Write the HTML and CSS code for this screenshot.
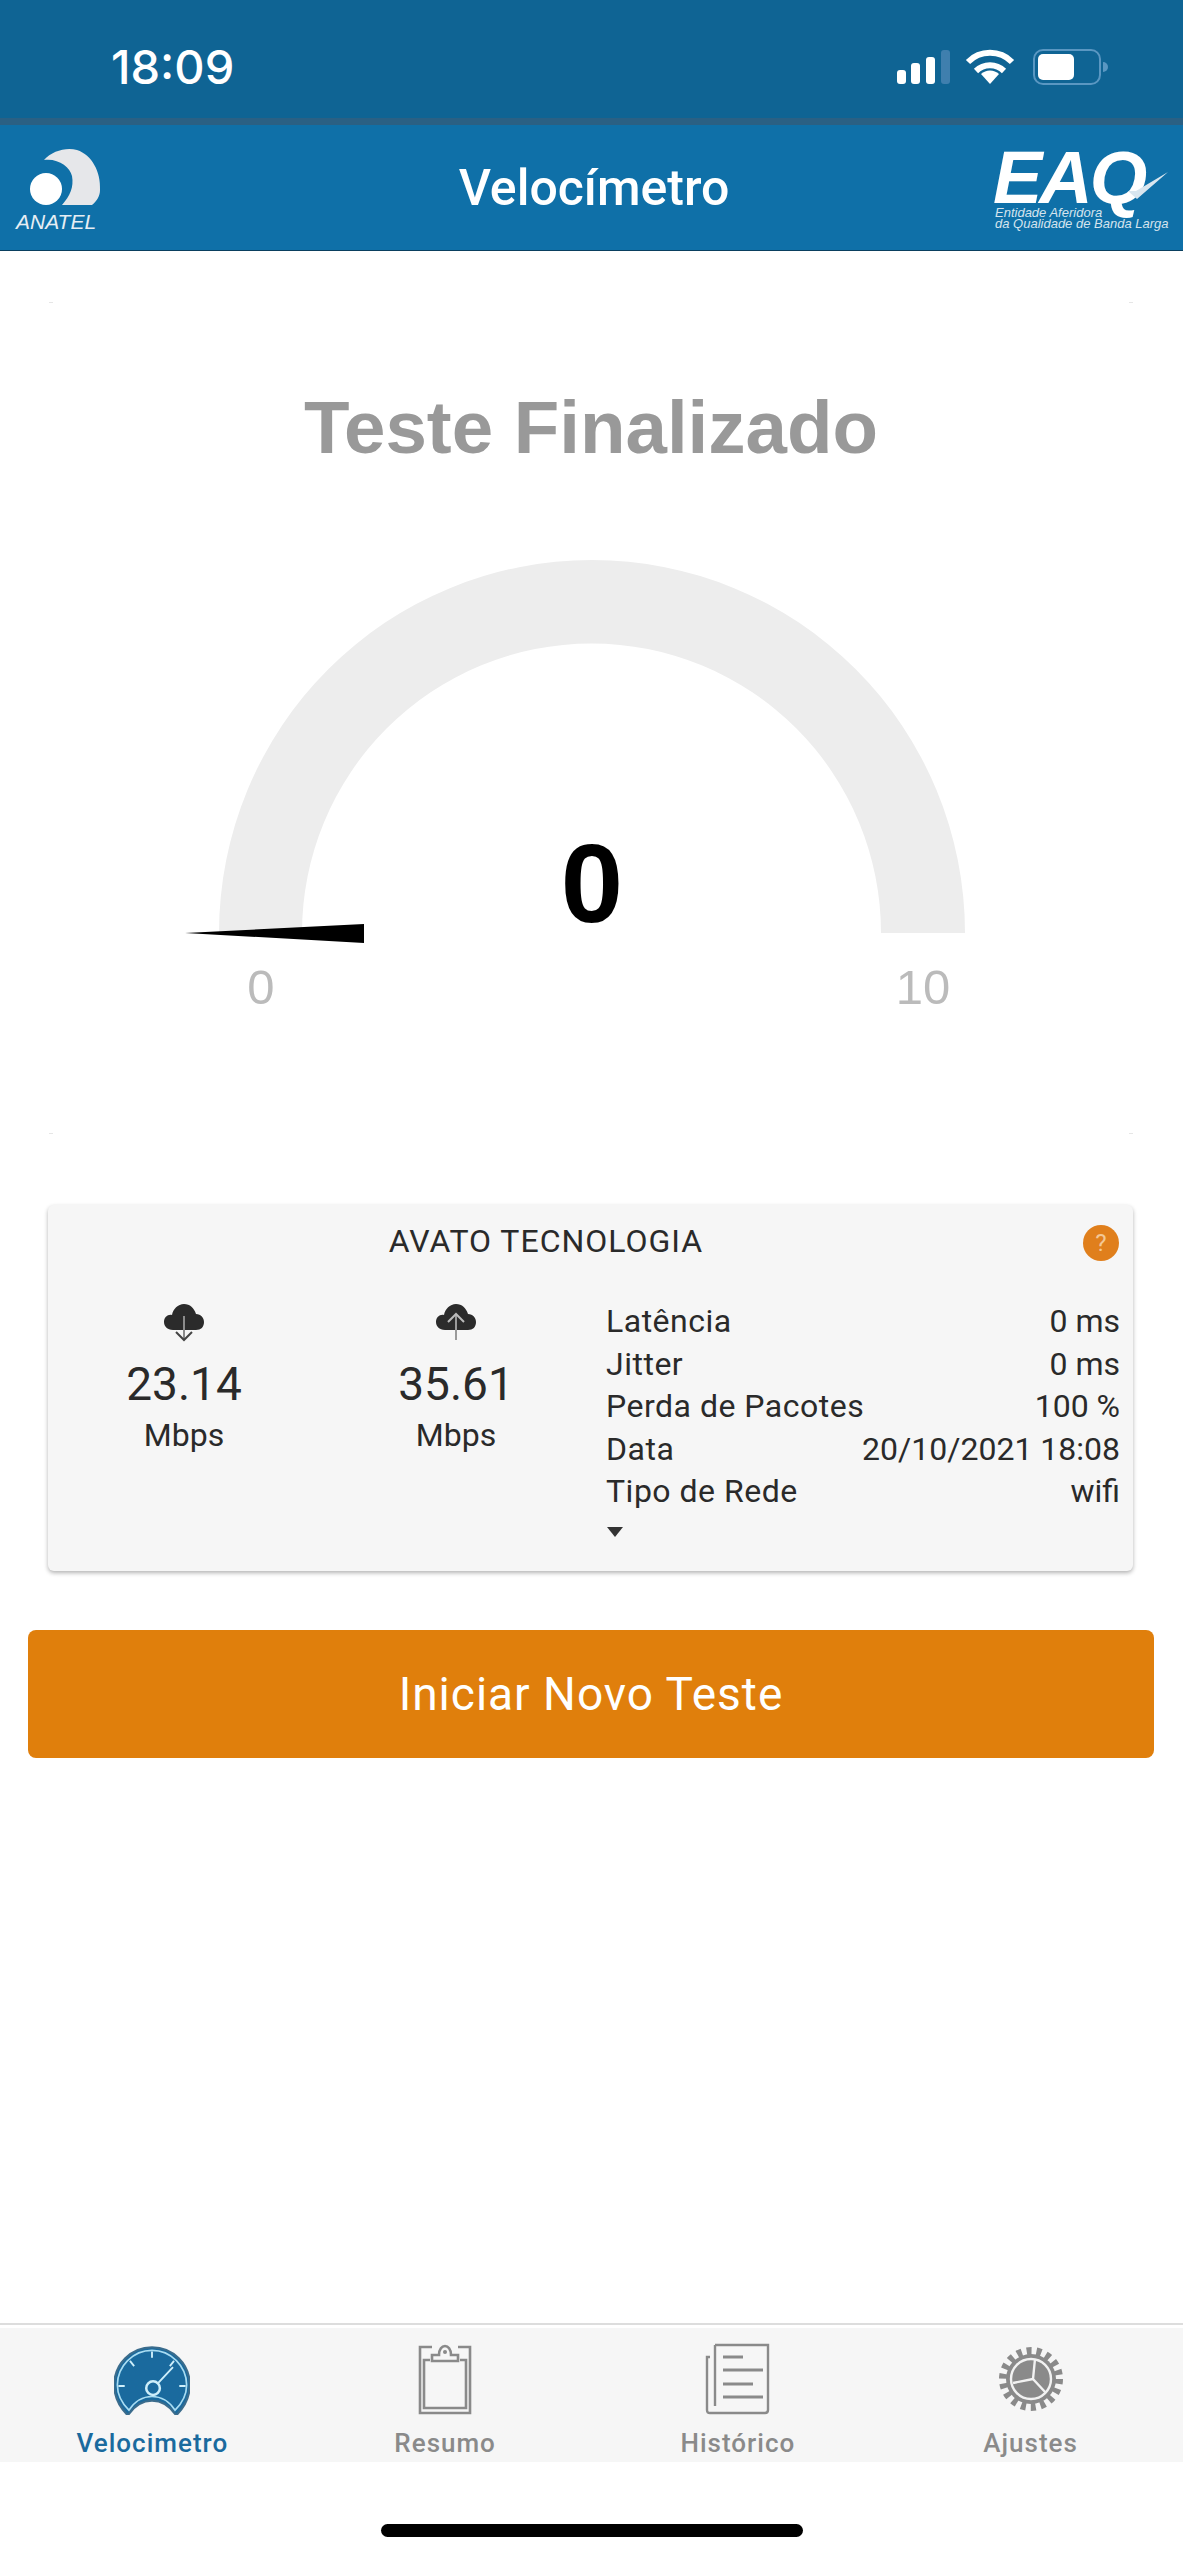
FILE: index.html
```html
<!DOCTYPE html>
<html lang="pt-BR">
<head>
    <meta charset="UTF-8">
    <meta name="viewport" content="width=device-width, initial-scale=1.0">
    <title>Velocímetro</title>
    <link rel="stylesheet" href="styles.css">
</head>
<body>

<div class="status-bar">
    <span class="status-time">18:09</span>
    <svg class="status-icons" viewBox="895 48 214 38" width="214" height="38">
        <rect x="897" y="70" width="9" height="14" rx="3" fill="#fff"/>
        <rect x="911" y="63" width="9" height="21" rx="3" fill="#fff"/>
        <rect x="926" y="57" width="9" height="27" rx="3" fill="#fff"/>
        <rect x="941" y="50" width="9" height="34" rx="3" fill="#3f7fae"/>
        <path d="M968 62A31 31 0 0 1 1012 62M976 71A20 20 0 0 1 1004 71" fill="none" stroke="#fff" stroke-width="6"/>
        <path d="M990 84L981 74A13 13 0 0 1 999 74Z" fill="#fff"/>
        <rect x="1034" y="50" width="66" height="34" rx="9" fill="none" stroke="#5a97c2" stroke-width="2"/>
        <rect x="1038" y="54" width="36" height="26" rx="5" fill="#fff"/>
        <path d="M1103 62A5 5 0 0 1 1103 72Z" fill="#5a97c2"/>
    </svg>
</div>
<div class="status-band"></div>

<header class="nav">
    <svg class="nav-logo nav-logo-left" viewBox="14 125 90 125" width="90" height="125">
        <path d="M44 160C52 151 66 147 77 150C92 155 101 172 100 190C100 196 97 201 92 205H62C70 196 74 187 72 176C70 167 58 158 44 160Z" fill="#e6e7ea"/>
        <circle cx="46" cy="189" r="16" fill="#fff"/>
        <text class="logo-anatel" x="16" y="229">ANATEL</text>
    </svg>
    <h1 class="nav-title">Velocímetro</h1>
    <svg class="nav-logo nav-logo-right" viewBox="990 125 180 125" width="180" height="125">
        <text class="logo-eaq" x="993" y="203">EAQ</text>
        <path d="M1128 191L1137 199L1168 172L1136 191Z" fill="#d9e6ef"/>
        <text class="logo-small" x="995" y="217">Entidade Aferidora</text>
        <text class="logo-small" x="995" y="228">da Qualidade de Banda Larga</text>
    </svg>
</header>

<main class="content">
    <section class="gauge-card">
        <h2 class="gauge-title">Teste Finalizado</h2>
        <svg class="gauge" viewBox="49 540 1084 490" width="1084" height="490">
            <path d="M219 933A373 373 0 0 1 965 933H881A289 289 0 0 0 302 933Z" fill="#ededed"/>
            <path d="M185 933L364 924V943Z" fill="#000"/>
            <text class="gauge-value" x="592" y="922">0</text>
            <text class="gauge-limit" x="261" y="1004">0</text>
            <text class="gauge-limit" x="923" y="1004">10</text>
        </svg>
    </section>

    <section class="info-card">
        <div class="info-head">
            <span class="info-title">AVATO TECNOLOGIA</span>
            <span class="help-badge">?</span>
        </div>
        <div class="info-body">
            <div class="speed">
                <svg class="cloud" viewBox="0 0 40 38" width="40" height="38">
                    <path d="M9 26C3 26 0 22 0 18C0 13 4 10 8 11C9 5 14 0 20 0C26 0 30 4 32 10C37 10 40 14 40 18C40 23 37 26 32 26Z" fill="#2b2b2b"/>
                    <path d="M20 12V36" stroke="#8c8c8c" stroke-width="2" fill="none"/>
                    <path d="M12 28L20 36L28 28" stroke="#444" stroke-width="2" fill="none"/>
                </svg>
                <span class="speed-value">23.14</span>
                <span class="speed-unit">Mbps</span>
            </div>
            <div class="speed">
                <svg class="cloud" viewBox="0 0 40 38" width="40" height="38">
                    <path d="M9 26C3 26 0 22 0 18C0 13 4 10 8 11C9 5 14 0 20 0C26 0 30 4 32 10C37 10 40 14 40 18C40 23 37 26 32 26Z" fill="#2b2b2b"/>
                    <path d="M20 36V10" stroke="#9a9a9a" stroke-width="2" fill="none"/>
                    <path d="M12 18L20 10L28 18" stroke="#bbb" stroke-width="2" fill="none"/>
                </svg>
                <span class="speed-value">35.61</span>
                <span class="speed-unit">Mbps</span>
            </div>
            <div class="stats">
                <div class="stat-row"><span class="stat-key">Latência</span><span>0 ms</span></div>
                <div class="stat-row"><span class="stat-key">Jitter</span><span>0 ms</span></div>
                <div class="stat-row"><span class="stat-key">Perda de Pacotes</span><span>100 %</span></div>
                <div class="stat-row"><span class="stat-key">Data</span><span>20/10/2021 18:08</span></div>
                <div class="stat-row"><span class="stat-key">Tipo de Rede</span><span>wifi</span></div>
                <div class="caret"></div>
            </div>
        </div>
    </section>

    <button class="start-button">Iniciar Novo Teste</button>
</main>

<nav class="tabbar">
    <div class="tab tab-active">
        <svg class="tab-icon" viewBox="13.8 7 72.4 68.6" width="76" height="72">
            <path d="M27 76C19 68 14 58 14 47C14 27 30 11 50 11C70 11 86 27 86 47C86 58 81 68 73 76C67 67 59 62 50 62C41 62 33 67 27 76Z" fill="#1a6a9e" stroke="#3b6c8c" stroke-width="2"/>
            <path d="M28 71C21 64 17 56 17 47C17 29 32 14 50 14C68 14 83 29 83 47C83 56 79 64 72 71C66 62 58 58 50 58C42 58 34 62 28 71Z" fill="none" stroke="#a8dcf2" stroke-width="1.6"/>
            <circle cx="51" cy="50" r="6.5" fill="none" stroke="#cdeefa" stroke-width="2.4"/>
            <path d="M56 45L70 30M50 15V21M29 24L33 29M71 24L67 29M18 48H24M76 48H82" stroke="#cdeefa" stroke-width="1.8" fill="none"/>
        </svg>
        <span class="tab-label">Velocimetro</span>
    </div>
    <div class="tab">
        <svg class="tab-icon" viewBox="0 0 54 72" width="54" height="72">
            <path d="M14 4H2V70H52V4H40" fill="none" stroke="#8a8a8a" stroke-width="2.6"/>
            <path d="M12 17H6V65H48V17H42" fill="none" stroke="#8a8a8a" stroke-width="2.6"/>
            <path d="M14 18V12H21C21 0 33 0 33 12H40V18Z" fill="none" stroke="#8a8a8a" stroke-width="2.6"/>
            <circle cx="27" cy="9" r="2" fill="#8a8a8a"/>
        </svg>
        <span class="tab-label">Resumo</span>
    </div>
    <div class="tab">
        <svg class="tab-icon" viewBox="0 0 66 72" width="66" height="72">
            <path d="M10 2H63V67Q63 70 60 70H5Q2 70 2 67V14H5M10 2V63" fill="none" stroke="#8a8a8a" stroke-width="2.4"/>
            <path d="M18 14H38M18 27H58M18 41H48M18 54H58" fill="none" stroke="#8a8a8a" stroke-width="3"/>
        </svg>
        <span class="tab-label">Histórico</span>
    </div>
    <div class="tab">
        <svg class="tab-icon" viewBox="0 0 72 72" width="72" height="72">
            <circle cx="36" cy="36" r="25" fill="#8a8a8a"/>
            <circle cx="36" cy="36" r="28" fill="none" stroke="#8a8a8a" stroke-width="8" stroke-dasharray="4.9 4.9"/>
            <circle cx="36" cy="36" r="20" fill="none" stroke="#f2f2f2" stroke-width="2.4"/>
            <path d="M38 36L40 16M38 36L18 40M38 36L51 50" fill="none" stroke="#f2f2f2" stroke-width="2.4"/>
        </svg>
        <span class="tab-label">Ajustes</span>
    </div>
</nav>

<div class="home-area">
    <div class="home-indicator"></div>
</div>

</body>
</html>
```

FILE: styles.css
```css
* {
    box-sizing: border-box;
}

html, body {
    margin: 0;
    background-color: #fff;
}

body {
    width: 1183px;
    height: 2560px;
    display: flex;
    flex-direction: column;
    font-family: Roboto, "Liberation Sans", sans-serif;
    color: #2a2a2a;
}

.status-bar {
    height: 118px;
    flex-shrink: 0;
    display: flex;
    justify-content: space-between;
    align-items: flex-start;
    padding: 0 74px 0 111px;
    background-color: #0f6494;
}

.status-time {
    margin-top: 40px;
    font-family: Inter, sans-serif;
    font-size: 47px;
    font-weight: 500;
    line-height: 54px;
    color: #fff;
}

.status-icons {
    margin-top: 48px;
}

.status-band {
    height: 7px;
    flex-shrink: 0;
    background-color: #2a6084;
}

.nav {
    height: 126px;
    flex-shrink: 0;
    display: grid;
    grid-template-columns: 1fr auto 1fr;
    align-items: center;
    background-color: #0f70a8;
    border-bottom: 1px solid #0a3f5f;
}

.nav-logo {
    display: block;
}

.nav-logo-left {
    margin-left: 14px;
}

.nav-logo-right {
    justify-self: end;
    margin-right: 13px;
}

.nav-title {
    margin: 0;
    padding-left: 5px;
    font-size: 50px;
    font-weight: 500;
    color: #fff;
}

.logo-anatel {
    font-family: "Liberation Sans", sans-serif;
    font-size: 21px;
    font-style: italic;
    fill: #e6eef4;
}

.logo-eaq {
    font-family: "Liberation Sans", sans-serif;
    font-size: 74px;
    font-weight: bold;
    font-style: italic;
    letter-spacing: -3px;
    fill: #fff;
}

.logo-small {
    font-family: "Liberation Sans", sans-serif;
    font-size: 13px;
    font-style: italic;
    fill: #d5e4ee;
}

.content {
    flex: 1;
    min-height: 0;
}

/* the card has no visible edge, only four specks at its corners */
.gauge-card {
    height: 832px;
    margin: 51px 50px 0 49px;
    padding-top: 86px;
    background-image:
        linear-gradient(#e6e6e6, #e6e6e6),
        linear-gradient(#e6e6e6, #e6e6e6),
        linear-gradient(#e6e6e6, #e6e6e6),
        linear-gradient(#e6e6e6, #e6e6e6);
    background-size: 4px 1px;
    background-repeat: no-repeat;
    background-position: left top, right top, left bottom, right bottom;
}

.gauge-title {
    margin: 0;
    font-family: "Liberation Sans", sans-serif;
    font-size: 74.5px;
    font-weight: bold;
    line-height: 80px;
    text-align: center;
    color: #999;
}

.gauge {
    display: block;
    margin-top: 72px;
}

.gauge-value {
    font-family: "Liberation Sans", sans-serif;
    font-size: 112px;
    font-weight: bold;
    text-anchor: middle;
    fill: #000;
}

.gauge-limit {
    font-family: "Liberation Sans", sans-serif;
    font-size: 49px;
    text-anchor: middle;
    fill: #bbb;
}

.info-card {
    height: 366px;
    margin: 71px 50px 0 48px;
    background-color: #f6f6f6;
    border-radius: 6px;
    box-shadow: 0 2px 4px rgba(0, 0, 0, 0.3);
}

.info-head {
    height: 95px;
    display: flex;
    justify-content: space-between;
    align-items: flex-start;
    padding-right: 14px;
}

.info-title {
    width: 996px;
    margin-top: 18px;
    font-size: 32px;
    line-height: 36px;
    letter-spacing: 1px;
    text-align: center;
}

.help-badge {
    width: 36px;
    height: 36px;
    margin-top: 20px;
    border-radius: 50%;
    background-color: #e07f1c;
    color: #f3c795;
    font-size: 24px;
    line-height: 36px;
    text-align: center;
}

.info-body {
    display: grid;
    grid-template-columns: 272px 272px 1fr;
}

.speed {
    display: flex;
    flex-direction: column;
    align-items: center;
    padding-top: 4px;
}

.cloud {
    display: block;
    margin-bottom: 15px;
}

.speed-value {
    font-size: 46px;
    line-height: 54px;
}

.speed-unit {
    margin-top: 4px;
    font-size: 32px;
    line-height: 40px;
}

.stats {
    padding: 0 13px 0 14px;
    font-size: 32px;
}

.stat-row {
    display: flex;
    justify-content: space-between;
    line-height: 42.6px;
}

.stat-key {
    letter-spacing: 0.5px;
}

.caret {
    width: 0;
    height: 0;
    margin: 14px 0 0 1px;
    border-left: 8px solid transparent;
    border-right: 8px solid transparent;
    border-top: 10px solid #333;
}

.start-button {
    display: block;
    width: 1126px;
    height: 128px;
    margin: 59px 0 0 28px;
    border: none;
    border-radius: 8px;
    background-color: #e07f0c;
    color: #fff;
    font-family: Roboto, sans-serif;
    font-size: 46px;
    letter-spacing: 1px;
}

.tabbar {
    height: 139px;
    flex-shrink: 0;
    display: grid;
    grid-template-columns: repeat(4, 1fr);
    padding: 18px 6px 0;
    background: linear-gradient(#fff 3px, #f6f6f6 3px);
    border-top: 2px solid #ddd;
}

.tab {
    display: flex;
    flex-direction: column;
    align-items: center;
}

.tab-icon {
    display: block;
    margin-bottom: 12px;
}

.tab-label {
    font-size: 26px;
    font-weight: 500;
    line-height: 32px;
    letter-spacing: 1px;
    color: #8a8a8a;
}

.tab-active .tab-label {
    color: #1a6a9e;
}

.home-area {
    height: 98px;
    flex-shrink: 0;
    padding-top: 62px;
}

.home-indicator {
    width: 422px;
    height: 13px;
    margin-left: 381px;
    border-radius: 7px;
    background-color: #000;
}
```
